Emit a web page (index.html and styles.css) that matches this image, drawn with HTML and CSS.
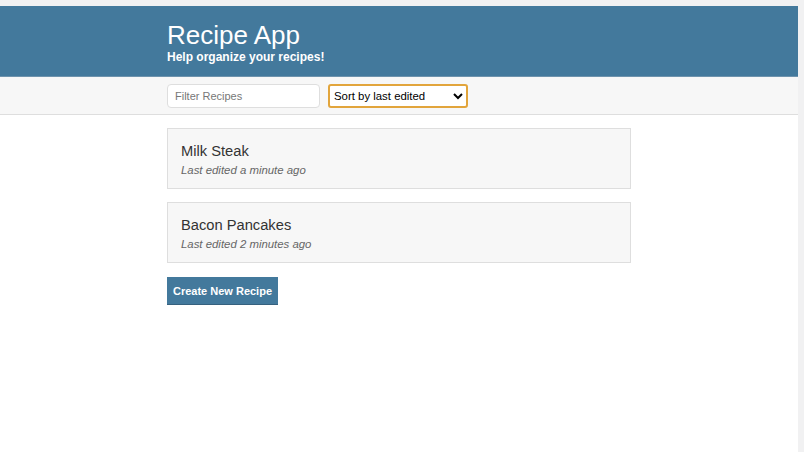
FILE: index.html
```html
<!DOCTYPE html>
<html>
<head>
<meta charset="utf-8">
<link rel="stylesheet" href="styles.css">
</head>
<body>
<div class="frame">
  <div class="page">
    <header class="header">
      <div class="container">
        <h1 class="header-title">Recipe App</h1>
        <h2 class="header-subtitle">Help organize your recipes!</h2>
      </div>
    </header>
    <div class="actions">
      <div class="container actions-row">
        <input class="input" type="text" placeholder="Filter Recipes">
        <select class="dropdown">
          <option>Sort by last edited</option>
          <option>Sort by recently created</option>
          <option>Sort alphabetically</option>
        </select>
      </div>
    </div>
    <main class="container content">
      <a class="list-item">
        <p class="list-item-title">Milk Steak</p>
        <p class="list-item-subtitle">Last edited a minute ago</p>
      </a>
      <a class="list-item">
        <p class="list-item-title">Bacon Pancakes</p>
        <p class="list-item-subtitle">Last edited 2 minutes ago</p>
      </a>
      <div class="button-row"><button class="button">Create New Recipe</button></div>
    </main>
  </div>
</div>
</body>
</html>
```

FILE: styles.css
```css
* { box-sizing: border-box; }
html, body { margin: 0; padding: 0; }
body {
  font-family: "Liberation Sans", Arial, sans-serif;
  background: #f1f1f2;
}
.frame {
  padding: 6px 6px 0 0;
  min-height: 452px;
}
.page {
  background: #ffffff;
  min-height: 446px;
}
.container {
  width: 464px;
  margin: 0 auto;
}
.header {
  background: #43799c;
  color: #ffffff;
  height: 71px;
  padding-top: 15px;
  border-bottom: 1px solid #6e93ad;
}
.header-title {
  margin: 0;
  font-size: 26px;
  font-weight: 400;
  line-height: 29px;
}
.header-subtitle {
  margin: 0;
  font-size: 12px;
  font-weight: 700;
  line-height: 14px;
}
.actions {
  background: #f7f7f7;
  border-bottom: 1px solid #dedede;
  height: 38px;
  padding-top: 7px;
}
.actions-row {
  display: flex;
  gap: 8px;
}
.input {
  width: 153px;
  height: 24px;
  border: 1px solid #dedede;
  border-radius: 4px;
  padding: 0 7px;
  font-family: "Liberation Sans", Arial, sans-serif;
  font-size: 11px;
  color: #333;
  background: #fff;
  outline: none;
}
.input::placeholder { color: #777; }
.dropdown {
  width: 140px;
  height: 24px;
  border: 2px solid #e2a53c;
  border-radius: 3px;
  font-family: "Liberation Sans", Arial, sans-serif;
  font-size: 11.4px;
  color: #000;
  background: #fff;
  padding: 0;
  outline: none;
}
.content {
  padding-top: 13px;
  display: flex;
  flex-direction: column;
  gap: 13px;
}
.list-item {
  display: block;
  background: #f7f7f7;
  border: 1px solid #dedede;
  height: 61px;
  padding: 13px 13px 0;
  color: #333;
  text-decoration: none;
}
.list-item-title {
  margin: 0;
  font-size: 14.7px;
  line-height: 19px;
  color: #333;
}
.list-item-subtitle {
  margin: 0;
  font-size: 11.4px;
  font-style: italic;
  line-height: 18px;
  color: #666;
}
.button-row {
  padding-top: 1px;
}
.button {
  background: #43799c;
  border: none;
  border-bottom: 1px solid #36617e;
  color: #fff;
  font-family: "Liberation Sans", Arial, sans-serif;
  font-size: 11px;
  font-weight: 700;
  height: 28px;
  width: 111px;
  padding: 0;
  cursor: pointer;
}
```
